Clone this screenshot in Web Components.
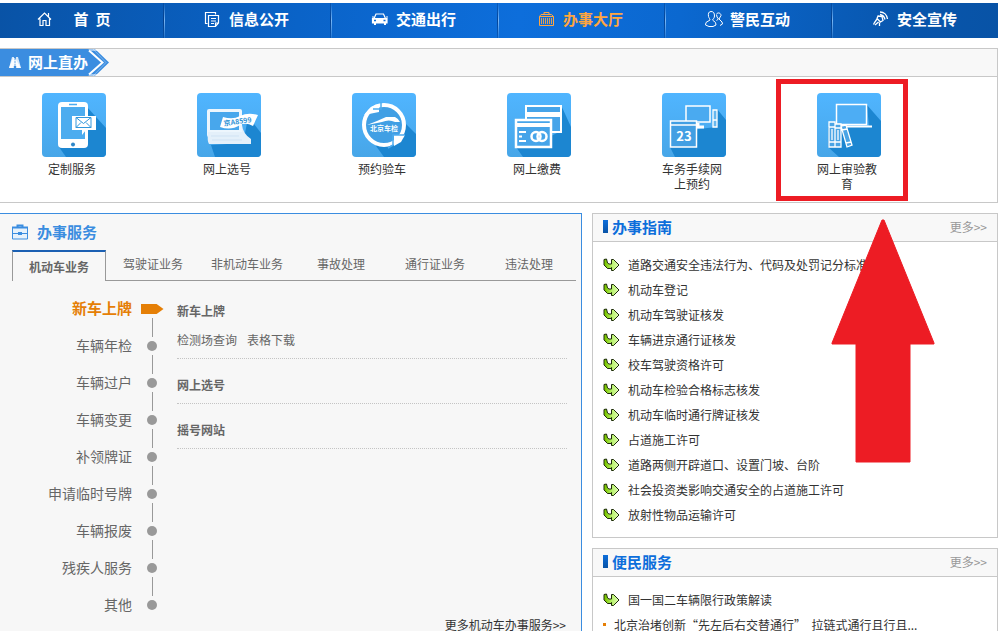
<!DOCTYPE html>
<html lang="zh-CN">
<head>
<meta charset="utf-8">
<title>办事大厅</title>
<style>
html, body { margin: 0; height: 100%; overflow: hidden; }
body {
  font: 12px/20px "Noto Sans CJK SC", sans-serif;
  color: #333;
  background: #fff;
}
</style>
</head>
<body>
<portal-page></portal-page>

<script>
const define = (name, html, setup) => {
  const template = document.createElement('template');
  template.innerHTML = html;
  customElements.define(name, class extends HTMLElement {
    constructor() {
      super();
      this.attachShadow({ mode: 'open' }).append(template.content.cloneNode(true));
    }
    connectedCallback() {
      if (setup && !this.ready) { this.ready = true; setup(this, this.shadowRoot); }
    }
  });
};

/* ---------- main navigation ---------- */
define('nav-item', `
<style>
:host { display: block; min-width: 0; }
a {
  display: flex; align-items: center; box-sizing: border-box; height: 35px;
  padding: 0 0 3px 39px; gap: 7px;
  color: #fff; text-decoration: none; font-weight: bold; font-size: 15px; line-height: 20px;
  white-space: pre; position: relative;
}
:host([active]) a { color: #ffa640; }
span { min-width: 60px; text-align: center; }
::slotted(svg) { width: 18px; height: 18px; flex: none; }
:host(:not(:last-child)) a::after {
  content: ""; position: absolute; right: 0; top: 0; width: 2px; height: 35px;
  background: linear-gradient(rgba(120,185,245,0), rgba(130,190,250,.9) 50%, rgba(120,185,245,.2)) right / 1px 100% no-repeat,
              linear-gradient(rgba(0,50,120,.3), rgba(0,50,120,.7) 50%, rgba(0,50,120,.3)) left / 1px 100% no-repeat;
}
</style>
<a href="#"><slot name="icon"></slot><span><slot></slot></span></a>`);

define('main-nav', `
<style>
:host { display: block; overflow: hidden; margin-top: 3px;
  background: linear-gradient(98deg, #0953a6 0%, #0a63c8 30%, #0d6edb 52%, #0b68d0 68%, #0855ab 92%, #0853a6 100%); }
nav { display: grid; grid-template-columns: repeat(6, minmax(0, 1fr)); margin: 0 -2px; }
</style>
<nav><slot></slot></nav>`);

/* ---------- online services ---------- */
define('service-tile', `
<style>
:host { display: block; width: 64px; position: relative; }
a { color: inherit; text-decoration: none; display: block; }
::slotted(svg) { display: block; width: 64px; height: 64px; border-radius: 4px;
  background: linear-gradient(#50b5ff, #47a6e8); }
span { display: block; width: 60px; margin-top: 4px; text-align: center; line-height: 15px; }
:host([marked])::after {
  content: ""; position: absolute; left: -41px; top: -14px; width: 122px; height: 112px;
  border: 5px solid #ed1c24;
}
</style>
<a href="#"><slot name="icon"></slot><span><slot></slot></span></a>`);

define('online-services', `
<style>
:host { display: block; margin-top: 10px; border: 1px solid #c8c8c8; border-left: 0; }
header { height: 27px; background: #f8f8f8; border-bottom: 1px solid #c8c8c8; display: grid; }
header > * { grid-area: 1 / 1; }
header svg { width: 110px; height: 27px; }
h2 { margin: 0; padding-left: 28px; font-size: 15px; line-height: 26px; color: #fff; z-index: 1; }
.row { display: flex; gap: 91px; min-height: 125px; box-sizing: border-box; padding: 16px 0 10px 42px; }
</style>
<header>
<svg viewBox="0 0 110 27"><path d="M0 0H95L109 13.500 95 27H0Z" fill="#3b8de0"/><path d="M88 0h9l2 2h-8zM88 27h9l2-2h-8z" fill="#fff" opacity=".5"/><path d="M89 1.500L102.500 13.500 89 25.500" fill="none" stroke="#fff" stroke-width="2"/><path d="M93 0L106 13.500 93 27" fill="none" stroke="#fff" stroke-width="1" opacity=".35"/>
<path d="M13 9h2l6 10h-4v-2h-4v2h-4z" fill="#e3f0fc"/><path d="M12 8h2v11H9zM16 8h2l3 11h-5z" fill="#fff" opacity=".8"/><path d="M15 9v9" stroke="#3b8de0" stroke-dasharray="2 1" opacity=".6"/></svg>
<h2><slot name="title"></slot></h2>
</header>
<div class="row"><slot></slot></div>`);

/* ---------- service desk panel ---------- */
define('tab-bar', `
<style>
:host { display: grid; grid-template-columns: repeat(6, minmax(0, 1fr)); }
a { color: #666; text-decoration: none; text-align: center; height: 30px; line-height: 28px;
  border-bottom: 1px solid #999; white-space: nowrap; }
a.on { font-weight: bold; line-height: 29px; height: 29px; box-sizing: content-box;
  border: 1px solid #999; border-top: 2px solid #1b60b3; border-bottom: 0; }
</style>`, (el, root) => {
  el.getAttribute('tabs').split(',').forEach((t, i) => {
    const a = document.createElement('a');
    a.href = '#'; a.textContent = t;
    if (!i) a.className = 'on';
    root.append(a);
  });
});

define('step-list', `
<style>
:host { display: block; }
ul { list-style: none; margin: 0; padding: 0; }
li { display: grid; grid-template-columns: 120px 40px; grid-template-rows: 19px 18px; align-items: center; }
li::before { content: ""; grid-area: 1 / 2; justify-self: center; width: 1px; height: 19px; background: #999; }
li::after { content: ""; grid-area: 2 / 2; justify-self: center; width: 10px; height: 10px; border-radius: 50%; background: #999; }
li:first-child { grid-template-rows: 0 18px; }
li:first-child::before { display: none; }
li:first-child::after { width: 23px; border-radius: 0; background: #e57f06;
  clip-path: polygon(0 0, 70% 0, 100% 50%, 70% 100%, 0 100%); }
a { grid-area: 2 / 1; text-align: right; font-size: 14px; line-height: 16px; padding-bottom: 2px; color: #666; text-decoration: none; white-space: nowrap; }
li:first-child a { font-weight: bold; font-size: 15px; color: #e57f06; }
</style>
<ul></ul>`, (el, root) => {
  const ul = root.querySelector('ul');
  el.getAttribute('steps').split(',').forEach(t => {
    const li = document.createElement('li');
    const a = document.createElement('a');
    a.href = '#'; a.textContent = t;
    li.append(a); ul.append(li);
  });
});

define('topic-block', `
<style>
:host { display: block; padding: 16px 0 8px; border-bottom: 1px dotted #c4c4c4; color: #666; }
h3 { margin: 0; font-size: 12px; line-height: 20px; }
p { margin: 0; display: flex; gap: 10px; }
::slotted(a) { color: inherit; text-decoration: none; margin-top: 9px; }
</style>
<h3><slot name="title"></slot></h3><p><slot></slot></p>`);

define('service-desk', `
<style>
:host { display: block; background: #f7f7f7; border: 1px solid #3b8de0; border-left: 0; border-bottom: 0; padding: 0 5px 12px 12px; }
header { display: flex; align-items: center; gap: 9px; height: 36px; }
header svg { width: 16px; height: 16px; }
h2 { margin: 0; font-size: 15px; line-height: 20px; color: #3b8de0; }
.cols { display: grid; grid-template-columns: 160px minmax(0, 1fr); gap: 5px; padding: 4px 9px 0 0; }
step-list { margin-top: 15px; }
.more { display: block; text-align: right; margin: 1px 10px 0 0; color: #333; text-decoration: none; }
</style>
<header><svg viewBox="0 0 16 16" fill="none" stroke="#3b8de0"><path d="M.5 3.500h15v11.500h-15z" fill="#e6f1fb"/><path d="M5.500 3V1.500h5V3" stroke-width="2"/><path d="M1 9.500h14"/><path d="M6 9.500h4" stroke-width="3"/><path d="M0 3.500h16" stroke-width="2"/></svg><h2>办事服务</h2></header>
<tab-bar tabs="机动车业务,驾驶证业务,非机动车业务,事故处理,通行证业务,违法处理"></tab-bar>
<div class="cols">
<step-list steps="新车上牌,车辆年检,车辆过户,车辆变更,补领牌证,申请临时号牌,车辆报废,残疾人服务,其他"></step-list>
<div>
<topic-block><span slot="title">新车上牌</span><a href="#">检测场查询</a><a href="#">表格下载</a></topic-block>
<topic-block><span slot="title">网上选号</span></topic-block>
<topic-block><span slot="title">摇号网站</span></topic-block>
</div>
</div>
<a class="more" href="#">更多机动车办事服务&gt;&gt;</a>`);

/* ---------- link panels ---------- */
define('guide-link', `
<style>
:host { display: block; }
a { display: flex; align-items: center; gap: 8px; height: 25px; color: #333; text-decoration: none; white-space: pre; }
svg { width: 17px; height: 14px; flex: none; }
i { display: none; width: 3px; height: 3px; background: #e57f06; }
:host([plain]) svg { display: none; }
:host([plain]) i { display: block; }
</style>
<a href="#"><svg viewBox="0 0 17 14"><defs><linearGradient id="g"><stop offset=".1" stop-color="#7cc800"/><stop offset=".5" stop-color="#b4f066"/><stop offset="1" stop-color="#e4ffb8"/></linearGradient></defs><path d="M1 1.500L3.500 1 4.500 5 6 6 8.500 6V1.500L10.500 1.500 16 7 10.500 12.500 8.500 12.500V9.500L8 10.500 4.500 10.500 1 7Z" fill="url(#g)" stroke="#1c2a08"/></svg><i></i><span><slot></slot></span></a>`);

define('link-panel', `
<style>
:host { display: block; border: 1px solid #c8c8c8; padding-bottom: 10px; }
header { display: flex; align-items: center; height: 25px; padding: 0 10px 2px; background: #f8f8f8; border-bottom: 1px solid #c8c8c8; }
header::before { content: ""; width: 5px; height: 13px; margin-right: 4px; background: linear-gradient(#0d6edb, #0953a6); }
h2 { margin: 0; flex: 1; font-size: 15px; line-height: 20px; color: #0d6edb; }
header a { color: #999; text-decoration: none; }
.list { padding: 10px 10px 0; }
</style>
<header><h2><slot name="title"></slot></h2><a href="#">更多&gt;&gt;</a></header>
<div class="list"><slot></slot></div>`);

/* ---------- page ---------- */
define('portal-page', `
<style>
:host { display: flow-root; padding-right: 5px; }
.lower { display: grid; grid-template-columns: minmax(0, 1fr) 406px; gap: 10px; margin-top: 10px; }
.side { display: grid; gap: 10px; align-content: start; position: relative; }
.pointer { position: absolute; right: 63px; top: 6px; width: 104px; height: 244px; }
</style>
<main-nav>
<nav-item><svg slot="icon" viewBox="0 0 18 18" fill="none" stroke="#fff" stroke-width="1.200"><path d="M1 9.500L7.500 3 14 9.500M3 8.500V15.500H6V10.500H9V15.500H12.500V8.500M11.500 3v3.500"/></svg>首&nbsp; 页</nav-item>
<nav-item><svg slot="icon" viewBox="0 0 18 18" fill="none" stroke="#fff" stroke-width="1.200"><path d="M3.500 13.500H1.500V2.500H11.500V4.500M4.500 5.500H14.500V13L11.500 16.500H4.500ZM14.500 13H11.500V16.500M7 8.500h5M7 11h5M7 13.500h3"/></svg>信息公开</nav-item>
<nav-item><svg slot="icon" viewBox="0 0 18 18" fill="none" stroke="#fff" stroke-width="1.200"><path d="M3 8.500L5 4H12.500L14.500 8.500M1 7h2M15 7h2"/><path d="M1.500 8.500H16V13H1.500Z" fill="#fff"/><path d="M3 10.500h2M12.500 10.500h2" stroke="#0d6bd4" stroke-width="1.500"/><path d="M3 14h2M13 14h2" stroke-width="2"/></svg>交通出行</nav-item>
<nav-item active><svg slot="icon" viewBox="0 0 18 18" fill="none" stroke="#ffa640"><path d="M1.500 6.500L3 4.500H13.500L15.500 6.500V15.500H1.500ZM6 4V2.500h5V4M1.500 6.500h14" /><path d="M3.500 8v6M5.500 8v6M7.500 8v6M9.500 8v6M11.500 8v6M13.500 8v6" opacity=".85"/></svg>办事大厅</nav-item>
<nav-item><svg slot="icon" viewBox="0 0 18 18" fill="none" stroke="#fff"><path d="M6 1.500C3.500 1.500 3 4 3.500 6.500 4 8 5 9 5 10L1 12.500 .5 15 4 16.500H8L11 15 10.500 12.500 7.500 10C8 9 9.500 8 9.500 6 9.500 3 8.500 1.500 6 1.500ZM11.500 4C13 2 16 3 16 5.500L14 9 17 12 17.500 14 15 15.500M11.500 4.500L12 7 13.500 9 11.500 10.500"/></svg>警民互动</nav-item>
<nav-item><svg slot="icon" viewBox="0 0 18 18" fill="none" stroke="#fff" stroke-width="1.300"><path d="M8 2C12 2 15 5 15.500 9M8 4.500C10.500 5 12.500 7 13 9.500M6 6L10 6.500 11 10.500 8.500 12 5 8.500ZM5 9L2.500 12.500 1.500 14.500M3 15L6.500 12M7.500 12.500V16"/></svg>安全宣传</nav-item>
</main-nav>

<online-services>
<span slot="title">网上直办</span>
<service-tile><svg slot="icon" viewBox="0 0 64 64"><path d="M45 14L64 35V64H24L17 54Z" fill="#1c86d1"/><path d="M20 9h22q4 0 4 4v38q0 4-4 4H20q-4 0-4-4V13q0-4 4-4z" fill="#fff"/><path d="M19 14h24v32H19z" fill="#4dacef"/><path d="M27 11.500h8" stroke="#4dacef" stroke-width="1.500"/><circle cx="31" cy="51.500" r="2" fill="#2d86c8"/><path d="M30 23h24v14H44l-4 5v-5H30z" fill="#fff"/><path d="M34 24.500h15v10H34zl7.500 6 7.500-6M34 34.500l5-5M49 34.500l-5-5" fill="none" stroke="#3297dc"/></svg>定制服务</service-tile>
<service-tile><svg slot="icon" viewBox="0 0 64 64"><path d="M50 30L57 31 64 40V64H18L14 52 46 50Z" fill="#1c86d1"/><rect x="10" y="16" width="35" height="28" rx="2" fill="#edf6fd"/><path d="M13 19h29v18H13z" fill="#48a7ec"/><path d="M11 39h34V32q1 9 9 14v5H12q-2-3-1-12z" fill="#e4f0fa"/><path d="M14 43h28M15 47h30" stroke="#d0e3f4" stroke-width="1"/><path d="M26 24Q36 27 43 23 51 19 61 22L56 33Q49 29 43 32 34 38 23 34Z" fill="#fff"/><text x="27" y="33" transform="rotate(-8 27 33)" font-size="7" font-weight="bold" fill="#3193d6">京A8599</text></svg>网上选号</service-tile>
<service-tile><svg slot="icon" viewBox="0 0 64 64"><path d="M52 29L64 41V64H32L24 53Z" fill="#1c86d1"/><circle cx="32" cy="32" r="20" fill="#419fe4" stroke="#fff" stroke-width="4"/><path d="M12 22l7-8 8-3v8z" fill="#fff"/><path d="M42 42h11l-4 7-7 4z" fill="#fff"/><path d="M29 9v7h-8M36 55l5-3v-10H53" stroke="#4dacef" stroke-width="1.500" fill="none"/><path d="M15 32L25 28 34 24H43Q47 26 48 29H43Q37 26 30 29L20 31Z" fill="#fff"/><text x="32" y="38" text-anchor="middle" font-size="7" font-weight="bold" fill="#fff">北京车检</text></svg>预约验车</service-tile>
<service-tile><svg slot="icon" viewBox="0 0 64 64"><path d="M54 12L64 34V64H16L9 54 40 45 54 38Z" fill="#1c86d1"/><path d="M19 13h35v26H19z" fill="#46a4e9" stroke="#fff" stroke-width="2"/><path d="M18 21.500h37" stroke="#fff" stroke-width="5"/><path d="M9 27h35v27H9z" fill="#46a4e9" stroke="#fff" stroke-width="2.500"/><path d="M9 32h35" stroke="#fff" stroke-width="4"/><path d="M12 39h7M12 43.500h3M12 48h7" stroke="#fff" stroke-width="2"/><g fill="none" stroke="#fff" stroke-width="2.500"><circle cx="29" cy="43.500" r="4.500"/><circle cx="35" cy="43.500" r="4.500"/></g></svg>网上缴费</service-tile>
<service-tile><svg slot="icon" viewBox="0 0 64 64"><path d="M55 16L64 27V64H13L8 54 36 36 55 34Z" fill="#1c86d1"/><path d="M24 13h24v16H24z" fill="#4aaaf0" stroke="#fff" stroke-width="1.500"/><path d="M36 30v5M35 34h7" stroke="#fff" stroke-width="3"/><path d="M51 17h4v17h-4zM51 27h4" fill="#66b7ef" stroke="#fff" stroke-width="1.300"/><path d="M8.500 28h26v26h-26z" fill="#429fe3" stroke="#fff" stroke-width="1.500"/><path d="M8 32h27" stroke="#fff" stroke-width="1.500"/><text x="22" y="48" text-anchor="middle" font-size="13" font-weight="bold" fill="#fff">23</text></svg>车务手续网上预约</service-tile>
<service-tile marked><svg slot="icon" viewBox="0 0 64 64"><path d="M50 12L64 28V64H22L11 54V34L52 34Z" fill="#1c86d1"/><path d="M19.500 11.500h30v20h-30z" fill="#4dadf4" stroke="#fff" stroke-width="1.500"/><path d="M24 33.500h31" stroke="#fff" stroke-width="2"/><g fill="#4aa4e5" stroke="#fff" stroke-width="1.300"><path d="M12 29h6v25h-6zM18 31h6v23h-6zM24 33l5-1 6 20-5 2zM12 34h6M12 49h6M18 35h6M18 49h6M25 37l5-1M29 50l5-1M15 36v11M21 37v10"/></g></svg>网上审验教育</service-tile>
</online-services>

<div class="lower">
<service-desk></service-desk>
<div class="side">
<link-panel><span slot="title">办事指南</span>
<guide-link>道路交通安全违法行为、代码及处罚记分标准</guide-link>
<guide-link>机动车登记</guide-link>
<guide-link>机动车驾驶证核发</guide-link>
<guide-link>车辆进京通行证核发</guide-link>
<guide-link>校车驾驶资格许可</guide-link>
<guide-link>机动车检验合格标志核发</guide-link>
<guide-link>机动车临时通行牌证核发</guide-link>
<guide-link>占道施工许可</guide-link>
<guide-link>道路两侧开辟道口、设置门坡、台阶</guide-link>
<guide-link>社会投资类影响交通安全的占道施工许可</guide-link>
<guide-link>放射性物品运输许可</guide-link>
</link-panel>
<link-panel><span slot="title">便民服务</span>
<guide-link>国一国二车辆限行政策解读</guide-link>
<guide-link plain>北京治堵创新“先左后右交替通行”&nbsp; 拉链式通行且行且...</guide-link>
</link-panel>
<svg class="pointer" viewBox="0 0 104 244" aria-hidden="true"><path d="M51 1h2L103 124V125H79V243H25V125H1V124Z" fill="#ed1c24" stroke="#ed1c24" stroke-linejoin="round"/></svg>
</div>
</div>`);
</script>
</body>
</html>
